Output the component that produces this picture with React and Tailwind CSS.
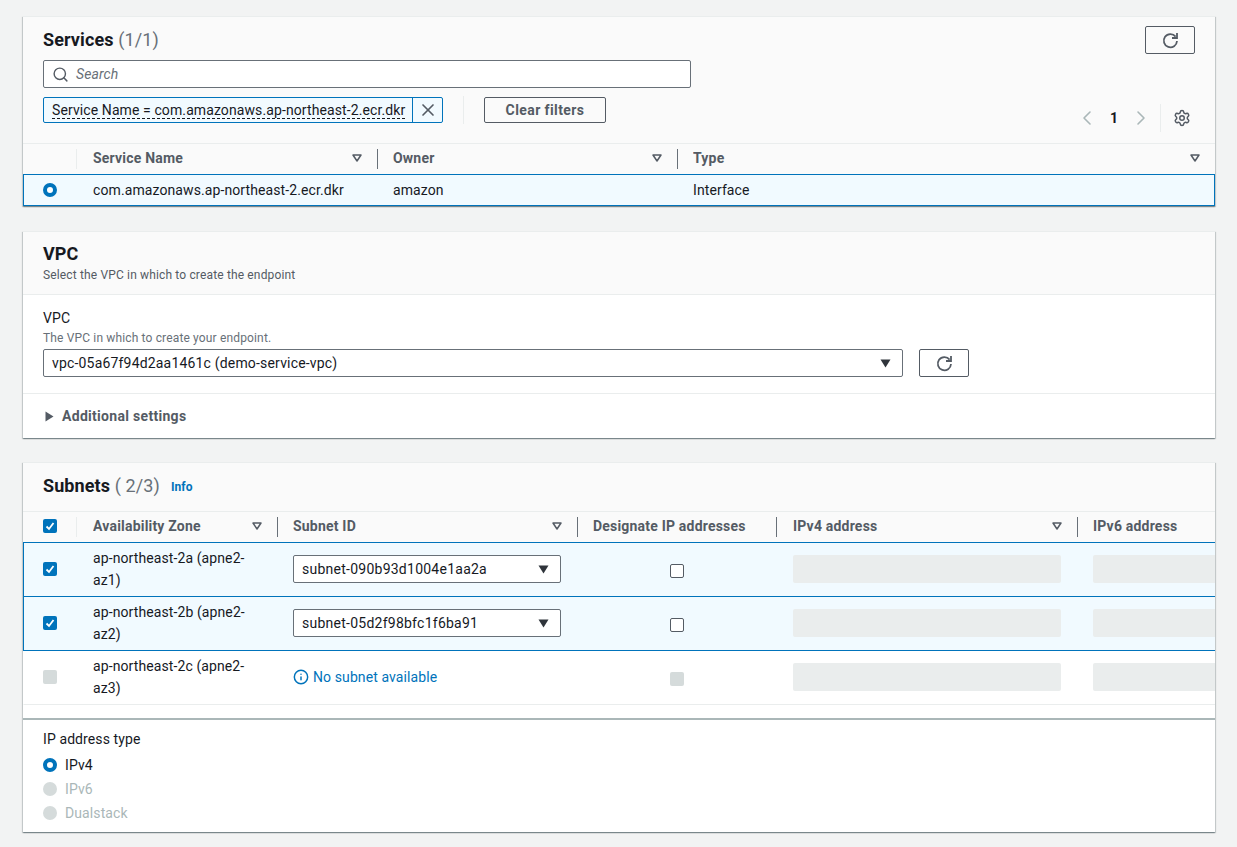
import React from "react";
import { ChevronLeft, ChevronRight, Info, Search, Settings, X } from "lucide-react";

const cardClass =
  "bg-white border-t border-[#eaeded] shadow-[0_1px_1px_0_rgba(0,28,36,0.3),1px_1px_1px_0_rgba(0,28,36,0.15),-1px_1px_1px_0_rgba(0,28,36,0.15)]";

function SortCaret() {
  return (
    <svg width="10" height="8" viewBox="0 0 10 8" className="shrink-0" aria-hidden>
      <path d="M1 1h8L5 7z" fill="none" stroke="#545b64" strokeWidth="1.5" strokeLinejoin="round" />
    </svg>
  );
}

function Caret({ className = "" }) {
  return (
    <svg width="11" height="9" viewBox="0 0 11 9" className={className} aria-hidden>
      <path d="M0.5 0.5h10L5.5 8.5z" fill="#2f343b" />
    </svg>
  );
}

function RefreshButton({ className = "" }) {
  return (
    <button
      type="button"
      className={`flex h-[28px] w-[50px] items-center justify-center rounded-[2px] border border-[#545b64] ${className}`}
    >
      <svg width="17" height="17" viewBox="0 0 17 17" fill="none" stroke="#545b64" strokeWidth="1.8" aria-hidden>
        <path d="M13.6 4.6A6.6 6.6 0 1 0 15 9" />
        <path d="M15 1v5h-5" />
      </svg>
    </button>
  );
}

function Radio({ state }) {
  if (state === "on") {
    return <span className="inline-block h-[14px] w-[14px] shrink-0 rounded-full border-[4px] border-[#0073bb] bg-white" />;
  }
  return <span className="inline-block h-[14px] w-[14px] shrink-0 rounded-full bg-[#d5dbdb]" />;
}

function Checkbox({ state }) {
  if (state === "on") {
    return (
      <span className="flex h-[14px] w-[14px] shrink-0 items-center justify-center rounded-[2px] bg-[#0073bb]">
        <svg width="10" height="10" viewBox="0 0 10 10" aria-hidden>
          <path d="M1.5 5.5l2.5 2.5 4.5-6" fill="none" stroke="#fff" strokeWidth="1.8" />
        </svg>
      </span>
    );
  }
  if (state === "disabled") {
    return <span className="block h-[14px] w-[14px] shrink-0 rounded-[2px] bg-[#d5dbdb]" />;
  }
  return <span className="block h-[14px] w-[14px] shrink-0 rounded-[2px] border border-[#545b64] bg-white" />;
}

function HeadCell({ children, sort, first, wide }) {
  return (
    <div className={`relative flex h-full items-center pb-[2px] pr-[15px] ${first || wide ? "pl-[17px]" : "pl-4"}`}>
      <span className={`absolute left-0 top-[5px] h-[20px] w-px ${first ? "bg-[#eaeded]" : "bg-[#687078]"}`} />
      <span className="flex-1 truncate text-[14px] font-bold tracking-[0.2px] text-[#545b64]">{children}</span>
      {sort ? <SortCaret /> : null}
    </div>
  );
}

function Services() {
  return (
    <section className={cardClass}>
      <div className="relative h-[126px] bg-[#fafafa] pl-5 pt-[9px]">
        <h2 className="text-[18px] font-bold leading-[28px] text-[#16191f]">
          Services <span className="font-normal text-[#687078]">(1/1)</span>
        </h2>
        <RefreshButton className="absolute right-5 top-[9px]" />
        <div className="mt-[6px] flex h-[28px] w-[648px] items-center gap-[7px] rounded-[2px] border border-[#687078] bg-white pl-2">
          <Search className="h-[17px] w-[17px] text-[#545b64]" strokeWidth={2} />
          <span className="text-[14px] italic text-[#687078]">Search</span>
        </div>
        <div className="mt-[9px] flex items-start">
          <div className="flex h-[26px] w-[400px] rounded-[2px] border border-[#0073bb] bg-[#f1faff]">
            <span className="flex-1 pl-2 pt-[3px] text-[14px] leading-[18px]">
              <span className="border-b border-dashed border-[#16191f] text-[#16191f]">
                Service Name = com.amazonaws.ap-northeast-2.ecr.dkr
              </span>
            </span>
            <span className="flex w-[30px] items-center justify-center border-l border-[#0073bb]">
              <X className="h-[20px] w-[20px] text-[#545b64]" strokeWidth={2} />
            </span>
          </div>
          <span className="ml-5 mt-[-1px] h-[28px] w-px bg-[#eaeded]" />
          <button
            type="button"
            className="ml-5 h-[26px] w-[122px] rounded-[2px] border border-[#545b64] text-[14px] font-bold tracking-[0.4px] text-[#545b64]"
          >
            Clear filters
          </button>
          <div className="ml-auto mt-[7px] flex h-[28px] items-center pr-[24px]">
            <ChevronLeft className="h-[24px] w-[24px] text-[#aab7b8]" strokeWidth={1.6} />
            <span className="w-[30px] text-center text-[14px] font-bold text-[#16191f]">1</span>
            <ChevronRight className="h-[24px] w-[24px] text-[#aab7b8]" strokeWidth={1.6} />
            <span className="ml-[7px] h-[28px] w-px bg-[#eaeded]" />
            <Settings className="ml-[12px] h-[18px] w-[18px] text-[#545b64]" strokeWidth={2} />
          </div>
        </div>
      </div>
      <div className="grid h-[31px] grid-cols-[53px_301px_300px_1fr] border-t border-[#eaeded] bg-[#fafafa]">
        <div />
        <HeadCell sort first>Service Name</HeadCell>
        <HeadCell sort>Owner</HeadCell>
        <HeadCell sort>Type</HeadCell>
      </div>
      <div className="grid h-[32px] grid-cols-[52px_301px_300px_1fr] items-center border border-[#0073bb] bg-[#f1faff] text-[14px] text-[#16191f]">
        <div className="flex items-center pl-[19px]">
          <Radio state="on" />
        </div>
        <div className="pl-[17px]">com.amazonaws.ap-northeast-2.ecr.dkr</div>
        <div className="pl-4">amazon</div>
        <div className="pl-4">Interface</div>
      </div>
    </section>
  );
}

function Vpc() {
  return (
    <section className={`${cardClass} mt-[25px]`}>
      <div className="h-[63px] border-b border-[#eaeded] bg-[#fafafa] pl-5 pt-[9px]">
        <h2 className="text-[18px] font-bold leading-[26px] text-[#16191f]">VPC</h2>
        <p className="text-[12px] leading-[16px] tracking-[0.15px] text-[#545b64]">Select the VPC in which to create the endpoint</p>
      </div>
      <div className="h-[99px] border-b border-[#eaeded] pl-5 pt-[14px]">
        <div className="text-[14px] leading-[18px] text-[#16191f]">VPC</div>
        <div className="mt-[4px] text-[12px] leading-[14px] tracking-[0.15px] text-[#687078]">The VPC in which to create your endpoint.</div>
        <div className="mt-[4px] flex items-center gap-4">
          <div className="flex h-[28px] w-[860px] items-center justify-between rounded-[2px] border border-[#687078] bg-white px-2 text-[14px] tracking-[0.18px] text-[#16191f]">
            <span>vpc-05a67f94d2aa1461c (demo-service-vpc)</span>
            <Caret className="mr-[3px]" />
          </div>
          <RefreshButton />
        </div>
      </div>
      <div className="flex h-[44px] items-center gap-[8px] pl-[22px] text-[14px] font-bold tracking-[0.3px] text-[#545b64]">
        <svg width="9" height="11" viewBox="0 0 9 11" aria-hidden>
          <path d="M0.5 0.5v10l8-5z" fill="#545b64" />
        </svg>
        Additional settings
      </div>
    </section>
  );
}

const subnetCols = "grid-cols-[52px_201px_300px_199px_301px_1fr]";

const subnetRows = [
  { zone: "ap-northeast-2a (apne2-az1)", subnet: "subnet-090b93d1004e1aa2a", selected: true },
  { zone: "ap-northeast-2b (apne2-az2)", subnet: "subnet-05d2f98bfc1f6ba91", selected: true },
  { zone: "ap-northeast-2c (apne2-az3)", selected: false },
];

function SubnetRow({ row }) {
  const rowClass = row.selected
    ? "bg-[#f1faff] border-l border-b border-[#0073bb]"
    : "bg-white border-l border-b border-l-transparent border-b-[#eaeded]";
  return (
    <div className={`grid h-[54px] ${subnetCols} items-center pb-[1px] ${rowClass}`}>
      <div className="flex items-center pl-[19px]">
        <Checkbox state={row.selected ? "on" : "disabled"} />
      </div>
      <div className="pl-[17px] pr-4 text-[14px] leading-[22px] text-[#16191f]">{row.zone}</div>
      <div className="pl-4">
        {row.subnet ? (
          <div className="flex h-[28px] w-[268px] items-center justify-between rounded-[2px] border border-[#687078] bg-white pl-2 pr-[11px] text-[14px] tracking-[0.25px] text-[#16191f]">
            <span>{row.subnet}</span>
            <Caret />
          </div>
        ) : (
          <div className="flex items-center gap-[4px] text-[14px] tracking-[0.1px] text-[#0073bb]">
            <Info className="h-[16px] w-[16px]" strokeWidth={2.2} />
            No subnet available
          </div>
        )}
      </div>
      <div className="flex justify-center pt-[4px]">
        <Checkbox state={row.selected ? "off" : "disabled"} />
      </div>
      <div className="pl-[17px]">
        <div className="h-[28px] w-[268px] rounded-[2px] bg-[#eaeded]" />
      </div>
      <div className="pl-4">
        <div className="h-[28px] w-[268px] rounded-[2px] bg-[#eaeded]" />
      </div>
    </div>
  );
}

function Subnets() {
  return (
    <section className={`${cardClass} mt-[24px]`}>
      <div className="flex h-[48px] items-center gap-[11px] bg-[#fafafa] pb-[4px] pl-5">
        <h2 className="text-[18px] font-bold text-[#16191f]">
          Subnets <span className="font-normal text-[#687078]">( 2/3)</span>
        </h2>
        <span className="mt-[3px] text-[12px] font-bold text-[#0073bb]">Info</span>
      </div>
      <div className="overflow-hidden">
        <div className="grid h-[31px] grid-cols-[53px_201px_300px_199px_301px_1fr] border-t border-[#eaeded] bg-[#fafafa]">
          <div className="flex items-center pb-[2px] pl-5">
            <Checkbox state="on" />
          </div>
          <HeadCell sort first>Availability Zone</HeadCell>
          <HeadCell sort>Subnet ID</HeadCell>
          <HeadCell>Designate IP addresses</HeadCell>
          <HeadCell sort wide>IPv4 address</HeadCell>
          <HeadCell>IPv6 address</HeadCell>
        </div>
        <div className="border-t border-[#0073bb]">
          {subnetRows.map((row) => (
            <SubnetRow key={row.zone} row={row} />
          ))}
        </div>
      </div>
      <div className="h-[15px] border-b-2 border-[#aab7b8]" />
      <div className="h-[112px] pl-5 pt-[10px]">
        <div className="text-[14px] leading-[18px] text-[#16191f]">IP address type</div>
        <div className="mt-[8px] flex flex-col gap-[6px] text-[14px] leading-[18px]">
          <div className="flex items-center gap-2 text-[#16191f]">
            <Radio state="on" />
            IPv4
          </div>
          <div className="flex items-center gap-2 text-[#aab7b8]">
            <Radio />
            IPv6
          </div>
          <div className="flex items-center gap-2 text-[#aab7b8]">
            <Radio />
            Dualstack
          </div>
        </div>
      </div>
    </section>
  );
}

export default function App() {
  return (
    <div className="h-[847px] w-[1237px] overflow-hidden bg-[#f2f3f3] pl-[23px] pr-[22px] pt-4 font-['Roboto',sans-serif] tracking-[0.1px]">
      <Services />
      <Vpc />
      <Subnets />
    </div>
  );
}
